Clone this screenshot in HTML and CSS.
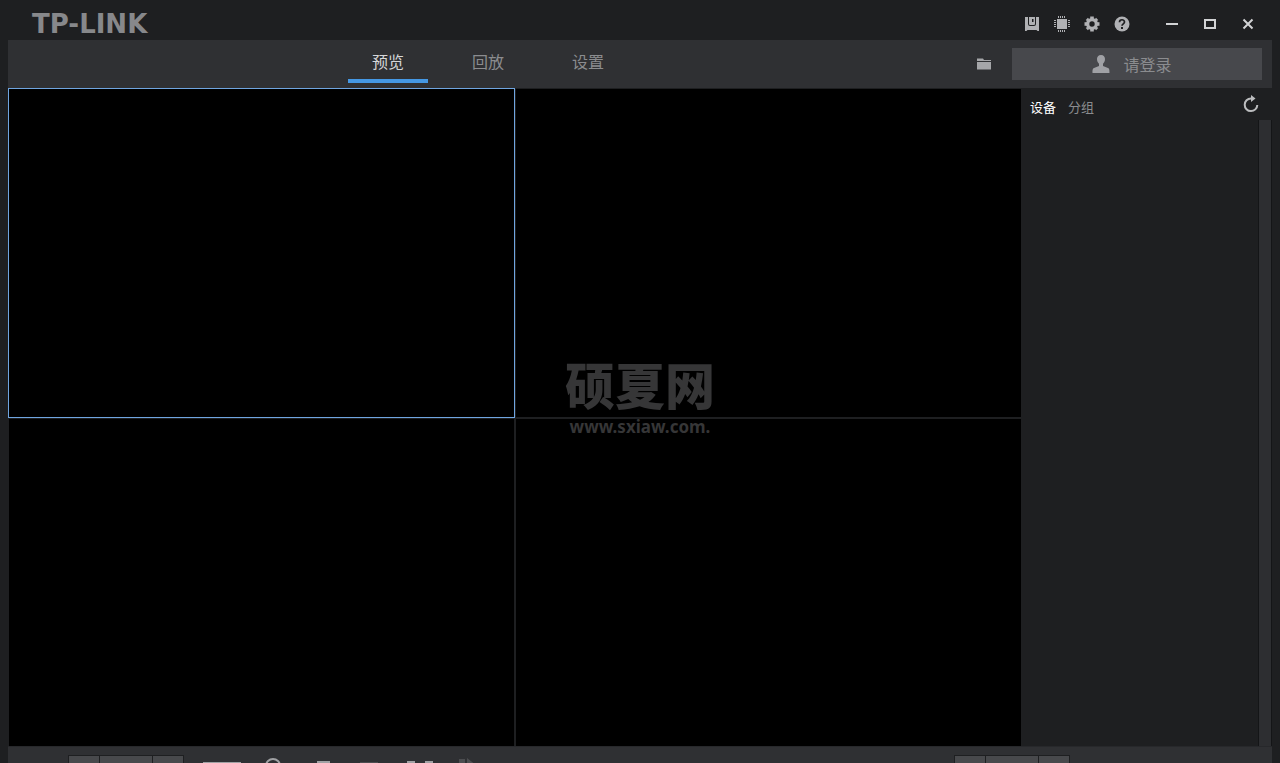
FILE: index.html
```html
<!DOCTYPE html>
<html lang="zh-CN">
<head>
<meta charset="utf-8">
<meta name="viewport" content="width=device-width, initial-scale=1">
<title>TP-LINK</title>
<link rel="stylesheet" href="styles.css">
</head>
<body>
<div class="app">
  <header class="titlebar">
    <div class="logo">TP-LINK</div>
    <div class="tools">
      <button class="icon-btn" aria-label="日志"><svg width="14" height="14" viewBox="0 0 14 14"><path fill="currentColor" fill-rule="evenodd" d="M0 0h14v14h-1.500l-1-1h-9l-1 1H0zM3 0v7q0 2 2 2h4q2 0 2-2V0h-1v7q0 1-1 1H5Q4 8 4 7V0zM7 2v3h1.500V2z"/></svg></button>
      <button class="icon-btn" aria-label="系统"><svg width="16" height="16" viewBox="0 0 16 16"><path fill="currentColor" d="M3 3h10v10H3z"/><path stroke="currentColor" stroke-width="1" d="M4.500 0v2M6.500 0v2M8.500 0v2M10.500 0v2M4.500 14v2M6.500 14v2M8.500 14v2M10.500 14v2M0 4.500h2M0 6.500h2M0 8.500h2M0 10.500h2M14 4.500h2M14 6.500h2M14 8.500h2M14 10.500h2"/></svg></button>
      <button class="icon-btn" aria-label="选项"><svg width="16" height="16" viewBox="0 0 16 16"><g fill="currentColor"><path fill-rule="evenodd" d="M8 2a6 6 0 1 0 0 12A6 6 0 0 0 8 2zm0 3.300a2.700 2.700 0 1 1 0 5.400 2.700 2.700 0 0 1 0-5.400z"/><path id="tooth" d="M6.200.500h3.600v3H6.200z"/><use href="#tooth" transform="rotate(90 8 8)"/><use href="#tooth" transform="rotate(180 8 8)"/><use href="#tooth" transform="rotate(270 8 8)"/><path id="corner" d="M6.500.700h3v2h-3z" transform="rotate(45 8 8)"/><use href="#corner" transform="rotate(90 8 8)"/><use href="#corner" transform="rotate(180 8 8)"/><use href="#corner" transform="rotate(270 8 8)"/></g></svg></button>
      <button class="icon-btn" aria-label="帮助"><svg width="16" height="16" viewBox="0 0 16 16"><circle cx="8" cy="8" r="7.500" fill="currentColor"/><path d="M5.500 6.200C5.500 3 10.500 3 10.500 6c0 1.800-2.500 1.900-2.500 3.800" fill="none" stroke="#1e1f21" stroke-width="1.700"/><path fill="#1e1f21" d="M7 11h2v2H7z"/></svg></button>
    </div>
    <div class="window-controls">
      <button class="icon-btn" aria-label="最小化"><svg width="12" height="12" viewBox="0 0 12 12"><path fill="currentColor" d="M0 5h12v2H0z"/></svg></button>
      <button class="icon-btn" aria-label="最大化"><svg width="12" height="12" viewBox="0 0 12 12"><path d="M1 2h10v8H1z" fill="none" stroke="currentColor" stroke-width="2"/></svg></button>
      <button class="icon-btn" aria-label="关闭"><svg width="12" height="12" viewBox="0 0 12 12"><path d="M1.500 1.500l9 9M10.500 1.500l-9 9" stroke="currentColor" stroke-width="2"/></svg></button>
    </div>
  </header>

  <nav class="navbar">
    <div class="tabs">
      <button class="tab active">预览</button>
      <button class="tab">回放</button>
      <button class="tab">设置</button>
    </div>
    <button class="icon-btn folder" aria-label="文件夹"><svg width="14" height="12" viewBox="0 0 14 12"><path fill="currentColor" d="M0 .500h6l1 1.500h7v1H0zM0 4h14v7.500H0z"/></svg></button>
    <button class="login"><svg width="18" height="18" viewBox="0 0 18 18"><path fill="currentColor" d="M9 0c2.700 0 4 1.700 4 4 0 2-.8 3.500-2 4.700V11l5 2c1.300.600 1.500 1.500 1.500 5H.500c0-3.500.200-4.400 1.500-5l5-2V8.700C5.800 7.500 5 6 5 4c0-2.300 1.300-4 4-4z"/></svg><span>请登录</span></button>
  </nav>

  <main class="content">
    <section class="video-grid">
      <div class="video selected"></div>
      <div class="video"></div>
      <div class="video"></div>
      <div class="video"></div>
    </section>
    <aside class="sidebar">
      <div class="side-head">
        <button class="side-tab active">设备</button>
        <button class="side-tab">分组</button>
        <button class="icon-btn refresh" aria-label="刷新"><svg width="16" height="18" viewBox="0 0 16 18"><path d="M10 3.500H8A6.300 6.300 0 1 0 14.300 10" fill="none" stroke="currentColor" stroke-width="2"/><path fill="currentColor" d="M8 0l4.500 3.600L8 7z"/></svg></button>
      </div>
      <div class="side-list"><div class="scrollbar"></div></div>
    </aside>
  </main>

  <footer class="toolbar">
    <div class="segments left"><button aria-label="视图一"></button><button class="wide" aria-label="视图二"></button><button aria-label="视图三"></button></div>
    <div class="actions">
      <svg width="280" height="10" viewBox="0 0 280 10"><g fill="#a0a1a4"><path d="M0 7h38v3H0z"/><path d="M114 6h13v4h-13zM204 6h8v4h-8zM222 6h8v4h-8z"/></g><circle cx="70" cy="11" r="7" fill="none" stroke="#a0a1a4" stroke-width="2"/><path fill="#4c4d50" d="M157 7h18v2h-18zM256 4h6v6h-6zM264 3l9 7h-9z"/></svg>
    </div>
    <div class="segments right"><button aria-label="布局一"></button><button class="wide" aria-label="布局二"></button><button aria-label="布局三"></button></div>
  </footer>

  <div class="watermark"><div class="mark-name">硕夏网</div><div class="mark-url">www.sxiaw.com.</div></div>
</div>
</body>
</html>
```
FILE: styles.css
```css
* { box-sizing: border-box; }

body {
  margin: 0;
  background: #1e1f21;
  color: #8b8c8f;
  font-family: "Liberation Sans", "Noto Sans CJK SC", sans-serif;
  overflow: hidden;
}

button {
  margin: 0;
  padding: 0;
  border: 0;
  background: none;
  color: inherit;
  font: inherit;
}

svg { display: block; }

.app {
  position: relative;
  display: flex;
  flex-direction: column;
  height: 100vh;
  padding: 0 8px;
}

.titlebar {
  display: flex;
  align-items: center;
  flex: 0 0 40px;
  padding: 8px 5px 0 24px;
}

.logo {
  margin-right: auto;
  color: #87888b;
  font: bold 26px/32px "DejaVu Sans", sans-serif;
}

.icon-btn {
  display: flex;
  align-items: center;
  justify-content: center;
}

.tools, .window-controls { display: flex; }
.tools { color: #b0b1b4; }
.tools .icon-btn { width: 30px; height: 32px; }
.window-controls { margin-left: 16px; color: #d2d3d5; }
.window-controls .icon-btn { width: 38px; height: 32px; }

.navbar {
  display: flex;
  align-items: center;
  flex: 0 0 48px;
  padding-right: 10px;
  background: #2f3033;
}

.tabs {
  display: flex;
  align-self: flex-start;
  gap: 20px;
  margin: 0 auto 0 340px;
}

.tab {
  width: 80px;
  height: 43px;
  padding-top: 6px;
  border-bottom: 4px solid transparent;
  font-size: 16px;
  line-height: 24px;
}
.tab.active { border-color: #4598e4; color: #d5d6d8; }

.folder { width: 16px; height: 32px; margin-right: 20px; color: #a5a6a9; }

.login {
  display: flex;
  align-items: center;
  justify-content: center;
  gap: 13px;
  width: 250px;
  height: 32px;
  padding-right: 10px;
  background: #47484c;
  font-size: 16px;
}
.login svg { color: #a0a1a5; }

.content { display: flex; flex: 1; min-height: 0; }

.video-grid {
  display: grid;
  grid-template-columns: 1fr 1fr;
  grid-template-rows: 1fr 1fr;
  gap: 2px;
  flex: 1;
  padding: 1px 0 0 1px;
}
.video { background: #000; }
.video.selected { z-index: 1; outline: 1px solid #6fa5e0; }

.sidebar {
  display: flex;
  flex-direction: column;
  flex: 0 0 251px;
}
.side-head {
  display: flex;
  align-items: center;
  gap: 12px;
  height: 32px;
  padding: 0 13px 0 9px;
  font-size: 13px;
}
.side-tab { padding-top: 4px; }
.side-tab.active { color: #fff; }
.refresh { margin-left: auto; color: #bcbdbf; }
.side-list { display: flex; flex: 1; justify-content: flex-end; }
.scrollbar { width: 14px; border: solid #141517; border-width: 0 1px; background: #2d2e31; }

.toolbar {
  display: flex;
  flex: 0 0 17px;
  padding: 8px 202px 0 60px;
  border-top: 1px solid #27282b;
  background: #2f3033;
  overflow: hidden;
}
.segments {
  display: flex;
  gap: 1px;
  height: 28px;
  padding: 1px;
  background: #1e1f21;
}
.segments button { width: 30px; background: #48494c; }
.segments .wide { width: 52px; }
.actions { margin: 0 auto 0 19px; }

.watermark {
  position: absolute;
  top: 50%;
  left: 50%;
  z-index: 2;
  transform: translate(-50%, -29px);
  color: #363637;
  text-align: center;
  pointer-events: none;
}
.mark-name { font: 900 50px/60px "Noto Sans CJK SC", sans-serif; }
.mark-url { font: bold 17px/28px "Noto Sans", sans-serif; }
```
